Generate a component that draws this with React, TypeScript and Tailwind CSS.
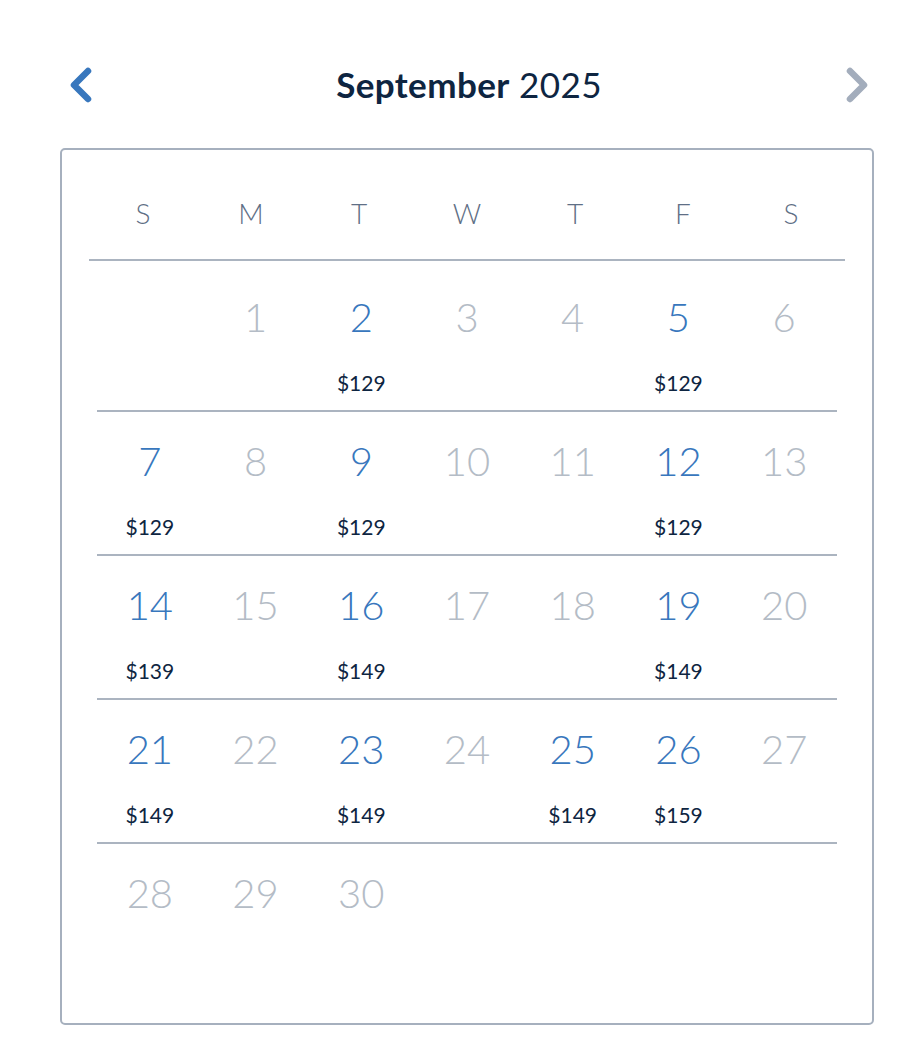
import clsx from 'clsx';

const font = { fontFamily: 'Lato, "Noto Sans", sans-serif' };

const weekdays = ['S', 'M', 'T', 'W', 'T', 'F', 'S'];

// price per available day
const prices: Record<number, string> = {
  2: '$129',
  5: '$129',
  7: '$129',
  9: '$129',
  12: '$129',
  14: '$139',
  16: '$149',
  19: '$149',
  21: '$149',
  23: '$149',
  25: '$149',
  26: '$159',
};

function buildWeeks() {
  const cells: (number | null)[] = [null];
  for (let d = 1; d <= 30; d++) cells.push(d);
  while (cells.length % 7 !== 0) cells.push(null);
  const weeks: (number | null)[][] = [];
  for (let i = 0; i < cells.length; i += 7) weeks.push(cells.slice(i, i + 7));
  return weeks;
}

function Chevron({ dir, color }: { dir: 'left' | 'right'; color: string }) {
  return (
    <svg width="26" height="40" viewBox="0 0 26 40" fill="none">
      <path
        d={dir === 'left' ? 'M20 6 L6 20 L20 34' : 'M6 6 L20 20 L6 34'}
        stroke={color}
        strokeWidth="6.5"
        strokeLinecap="round"
        strokeLinejoin="round"
      />
    </svg>
  );
}

export default function App() {
  const weeks = buildWeeks();

  return (
    <div className="w-[906px] min-h-[1062px] bg-white" style={font}>
      <div className="w-[814px] ml-[60px] pt-[44px]">
        {/* Month header */}
        <div className="h-[80px] flex items-center justify-between pl-[8px] pr-[4px]">
          <button className="w-[26px] h-[40px] flex items-center justify-center mt-[2px]">
            <Chevron dir="left" color="#3877bd" />
          </button>
          <h2 className="text-[35px] leading-none text-[#0e2541] tracking-[0.4px]">
            <span className="font-bold">September</span> <span className="font-normal">2025</span>
          </h2>
          <button className="w-[26px] h-[40px] flex items-center justify-center mt-[2px]">
            <Chevron dir="right" color="#a3adbc" />
          </button>
        </div>

        {/* Calendar card */}
        <div className="mt-[24px] border-2 border-[#a6b0be] rounded-[5px]">
          <div className="px-[27px]">
            <div className="grid grid-cols-7 pt-[45px] pb-[28px] border-b-2 border-[#abb4c0]">
              {weekdays.map((w, i) => (
                <div
                  key={i}
                  className="h-[36px] flex items-center justify-center text-[28px] font-light text-[#5f6f86]"
                >
                  {w}
                </div>
              ))}
            </div>
          </div>

          <div className="px-[35px] pt-[7px] pb-[35px]">
            {weeks.map((week, wi) => (
              <div
                key={wi}
                className={clsx(
                  'grid grid-cols-7 h-[144px]',
                  wi < weeks.length - 1 && 'border-b-2 border-[#abb4c0]'
                )}
              >
                {week.map((day, di) => {
                  const price = day ? prices[day] : undefined;
                  return (
                    <div key={di} className="flex flex-col items-center pt-[25px]">
                      {day && (
                        <>
                          <span
                            className={clsx(
                              'h-[48px] flex items-center text-[40px] font-light leading-none',
                              price ? 'text-[#3877bd]' : 'text-[#b4bcc6]'
                            )}
                          >
                            {day}
                          </span>
                          <span className="mt-[30px] h-[24px] flex items-center text-[21px] text-[#0e2541]">
                            {price ?? ''}
                          </span>
                        </>
                      )}
                    </div>
                  );
                })}
              </div>
            ))}
          </div>
        </div>
      </div>
    </div>
  );
}
